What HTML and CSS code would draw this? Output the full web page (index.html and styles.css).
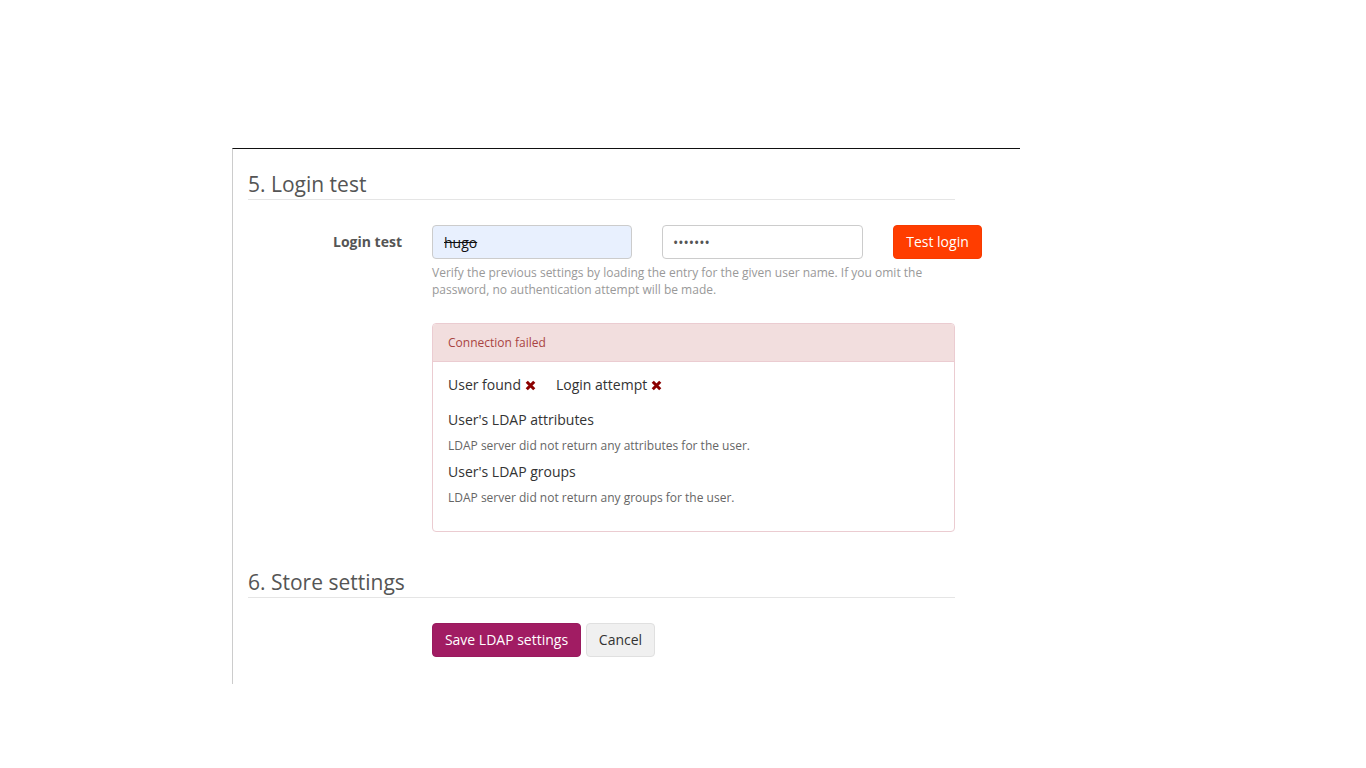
FILE: index.html
```html
<!DOCTYPE html>
<html lang="en">
<head>
<meta charset="utf-8">
<title>LDAP settings</title>
<link rel="stylesheet" href="styles.css">
</head>
<body>
<div class="page">
  <div class="panel">
    <section class="section">
      <h2 class="legend">5. Login test</h2>
      <div class="form-row">
        <label class="label" for="user">Login test</label>
        <div class="field">
          <div class="inputs">
            <input id="user" class="input autofill" type="text" value="hugo">
            <input class="input" type="password" value="1234567">
            <button class="btn btn-test" type="button">Test login</button>
          </div>
          <p class="help">Verify the previous settings by loading the entry for the given user name. If you omit the password, no authentication attempt will be made.</p>
          <div class="alert">
            <div class="alert-head">Connection failed</div>
            <div class="alert-body">
              <div class="checks">
                <span class="check">User found <svg class="x" viewBox="0 0 10 10" width="11" height="11"><path d="M1.6 1.6 L8.4 8.4 M8.4 1.6 L1.6 8.4" /></svg></span>
                <span class="check">Login attempt <svg class="x" viewBox="0 0 10 10" width="11" height="11"><path d="M1.6 1.6 L8.4 8.4 M8.4 1.6 L1.6 8.4" /></svg></span>
              </div>
              <h4 class="sub">User's LDAP attributes</h4>
              <p class="note">LDAP server did not return any attributes for the user.</p>
              <h4 class="sub">User's LDAP groups</h4>
              <p class="note">LDAP server did not return any groups for the user.</p>
            </div>
          </div>
        </div>
      </div>
    </section>
    <section class="section store">
      <h2 class="legend">6. Store settings</h2>
      <div class="form-row">
        <div class="label"></div>
        <div class="field actions">
          <button class="btn btn-save" type="button">Save LDAP settings</button>
          <button class="btn btn-cancel" type="button">Cancel</button>
        </div>
      </div>
    </section>
  </div>
</div>
</body>
</html>
```

FILE: styles.css
```css
html, body {
  margin: 0;
  padding: 0;
  background: #fff;
}
body {
  font-family: "Open Sans", "Liberation Sans", sans-serif;
  font-size: 14px;
  color: #333;
}
.page {
  padding: 148px 0 0 232px;
}
.panel {
  width: 707px;
  border-top: 1px solid #111;
  border-left: 1px solid #ccc;
  padding: 0 65px 27px 15px;
}
.section {
  padding-top: 23px;
}
.store {
  padding-top: 38px;
}
.legend {
  margin: 0;
  font-size: 21px;
  font-weight: 400;
  line-height: 24px;
  color: #555;
  padding-bottom: 3px;
  border-bottom: 1px solid #e5e5e5;
}
.form-row {
  display: flex;
  margin-top: 25px;
}
.label {
  flex: 0 0 154px;
  margin-right: 30px;
  text-align: right;
  font-weight: 700;
  color: #555;
  line-height: 34px;
}
.field {
  flex: 1;
  min-width: 0;
}
.inputs {
  display: flex;
  gap: 30px;
}
.input {
  flex: 0 0 auto;
  box-sizing: border-box;
  width: 201px;
  height: 34px;
  border: 1px solid #ccc;
  border-radius: 4px;
  padding: 0 10px;
  font-family: "Open Sans", "Liberation Sans", sans-serif;
  font-size: 14px;
  color: #555;
  background: #fff;
}
.autofill {
  width: 200px;
  background: #e8f0fe;
  color: #111;
  text-decoration: line-through;
  padding-left: 11px;
}
.btn {
  flex: 0 0 auto;
  box-sizing: border-box;
  height: 34px;
  border: 1px solid transparent;
  border-radius: 4px;
  padding: 0 12px;
  font-family: "Open Sans", "Liberation Sans", sans-serif;
  font-size: 14px;
  line-height: 32px;
  white-space: nowrap;
}
.btn-test {
  background: #ff3d00;
  border-color: #f73b00;
  color: #fff;
  width: 89px;
  padding: 0;
}
.help {
  margin: 5px 0 0;
  font-size: 12px;
  line-height: 17px;
  color: #999;
  width: 523px;
}
.alert {
  margin-top: 25px;
  width: 523px;
  box-sizing: border-box;
  border: 1px solid #ebccd1;
  border-radius: 4px;
}
.alert-head {
  background: #f2dede;
  color: #a94442;
  font-size: 12px;
  line-height: 17px;
  padding: 10px 15px;
  border-bottom: 1px solid #ebccd1;
  border-radius: 3px 3px 0 0;
}
.alert-body {
  padding: 13px 15px 25px;
}
.checks {
  display: flex;
  gap: 20px;
  line-height: 20px;
}
.check {
  display: inline-flex;
  align-items: center;
  gap: 4px;
}
.x {
  stroke: #8b0000;
  stroke-width: 2.8;
  fill: none;
}
.sub {
  margin: 15px 0 0;
  font-size: 14px;
  font-weight: 400;
  line-height: 20px;
  color: #333;
}
.note {
  margin: 7px 0 0;
  font-size: 12px;
  line-height: 17px;
  color: #666;
}
.note + .sub {
  margin-top: 8px;
}
.actions {
  display: flex;
  gap: 5px;
}
.btn-save {
  background: #a11c63;
  border-color: #991a5e;
  color: #fff;
  width: 149px;
  padding: 0;
}
.btn-cancel {
  background: #f0f0f0;
  border-color: #e0e0e0;
  color: #333;
  width: 69px;
  padding: 0;
}
```
